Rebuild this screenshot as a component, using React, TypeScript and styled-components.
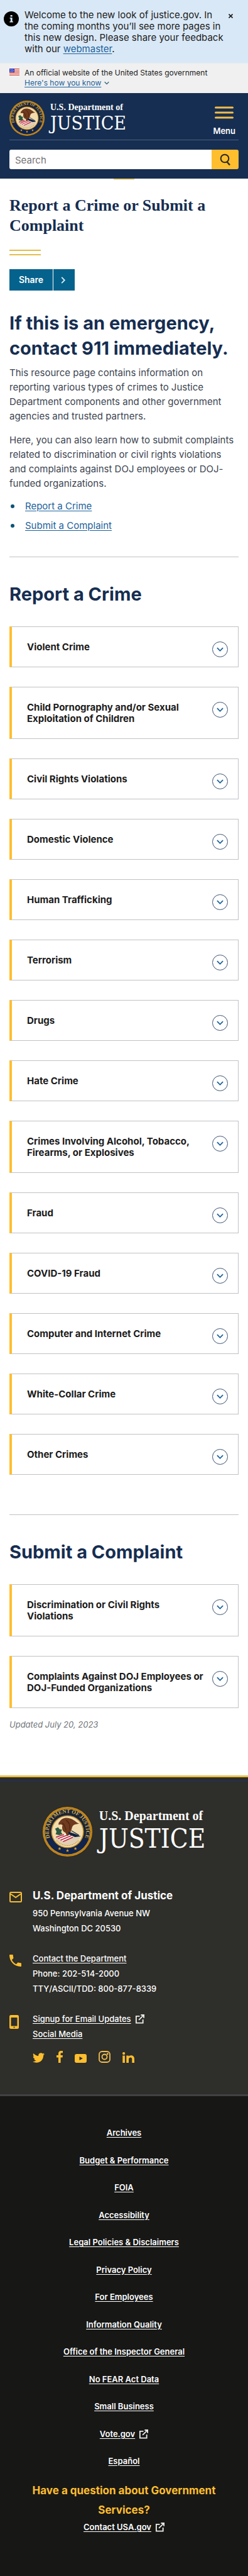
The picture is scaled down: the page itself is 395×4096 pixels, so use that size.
import React from 'react';
import styled, { createGlobalStyle } from 'styled-components';

const GlobalStyle = createGlobalStyle`
  *, *::before, *::after { box-sizing: border-box; }
  body {
    margin: 0;
    background: #171716;
    color: #1b1b1b;
    font-family: Inter, Roboto, "Liberation Sans", sans-serif;
    font-size: 15px;
    line-height: 23px;
  }
  h1, h2, h3, p, ul { margin: 0; padding: 0; }
  ul { list-style: none; }
  button, input { font: inherit; }
  svg { display: block; flex: none; }
`;

const Page = styled.div`
  background: #fff;
`;

const Link = styled.a`
  color: #1c629c;
  text-decoration: underline;
  text-underline-offset: 2px;
`;

/* Site alert */
const Alert = styled.section`
  display: flex;
  align-items: flex-start;
  padding: 15px 0 13px 6px;
  background: #d9e8f6;
  border-bottom: 1px solid #e4edf5;
`;

const AlertIcon = styled.svg`
  margin: 3px 9px 0 0;
`;

const AlertText = styled.p`
  flex: 1;
  line-height: 18px;
`;

const CloseButton = styled.button`
  flex: none;
  width: 34px;
  height: 16px;
  padding: 5px 0 0 3px;
  border: 0;
  background: none;
`;

/* Government banner */
const GovBanner = styled.div`
  display: flex;
  align-items: flex-start;
  gap: 8px;
  padding: 7px 15px 8px;
  background: #f0f0f0;
  font-size: 12px;
  line-height: 16px;
`;

const Flag = styled.svg`
  margin-top: 1px;
`;

const KnowButton = styled.button`
  display: flex;
  align-items: center;
  gap: 5px;
  padding: 0;
  border: 0;
  background: none;
  color: #1c629c;
  line-height: 16px;

  span {
    text-decoration: underline;
    text-underline-offset: 2px;
  }
`;

/* Header */
const Header = styled.header`
  padding: 0 15px 15px;
  background: #162e51;
  color: #fff;
`;

const HeaderTop = styled.div`
  display: flex;
  align-items: flex-start;
  justify-content: space-between;
  padding: 12px 5px 6px 0;
  border-bottom: 1px solid #4c607f;
`;

const Brand = styled.a<{ $large?: boolean }>`
  display: flex;
  justify-content: center;
  align-items: flex-start;
  gap: ${(p) => (p.$large ? 11 : 9)}px;
  color: #fff;
  text-decoration: none;
`;

const BrandText = styled.span`
  display: flex;
  flex-direction: column;
  padding-top: 4px;
`;

const BrandSmall = styled.span<{ $large?: boolean }>`
  font: 700 ${(p) => (p.$large ? '20px/20px' : '14px/14px')} "Liberation Serif", serif;
`;

const BrandName = styled.span<{ $large?: boolean }>`
  font: 400 ${(p) => (p.$large ? '42px/53px' : '30px/36px')} "DejaVu Serif Condensed", "DejaVu Serif", serif;
`;

const MenuButton = styled.button`
  display: flex;
  flex-direction: column;
  align-items: center;
  gap: 11px;
  padding: 9px 0 0;
  border: 0;
  background: none;
  color: #fff;
  font-size: 13px;
  font-weight: 600;
  line-height: 16px;
`;

const SearchForm = styled.form`
  display: flex;
  height: 46px;
  padding-top: 15px;
`;

const SearchInput = styled.input`
  flex: 1;
  min-width: 0;
  padding: 2px 9px 0;
  border: 0;
  border-radius: 3px 0 0 3px;
  background: #fff;
  color: #1b1b1b;

  &::placeholder { color: #757575; opacity: 1; }
`;

const SearchButton = styled.button`
  display: flex;
  align-items: center;
  justify-content: center;
  width: 43px;
  padding: 0;
  border: 0;
  border-radius: 0 3px 3px 0;
  background: #ffbe2e;
`;

const HeaderTab = styled.div`
  width: 33px;
  height: 2px;
  margin: 0 auto;
  background: #eed27a;
`;

/* Main content */
const Main = styled.main`
  padding: 25px 15px 69px;
`;

const Title = styled.h1`
  color: #162e51;
  font: 700 26px/32px "Liberation Serif", serif;
`;

const TitleRule = styled.div`
  width: 50px;
  height: 9px;
  margin: 22px 0;
  border: solid #e2be4a;
  border-width: 2px 0;
`;

const ShareButton = styled.button`
  display: flex;
  align-items: stretch;
  height: 34px;
  padding: 0;
  border: 0;
  background: #05628c;
  color: #fff;
  font-size: 14px;
  font-weight: 600;
  line-height: 34px;
`;

const ShareLabel = styled.span`
  width: 70px;
  border-right: 1px solid #fff;
`;

const ShareArrow = styled.span`
  display: flex;
  align-items: center;
  justify-content: center;
  width: 34px;
  padding-right: 4px;
`;

const Heading = styled.h2`
  color: #162e51;
  font-size: 29px;
  font-weight: 700;
  line-height: 40px;
`;

const Intro = styled.section`
  display: flex;
  flex-direction: column;
  margin-top: 32px;
  color: #3d4551;

  p { margin-bottom: 15px; }
  p:first-of-type { margin-top: 7px; }
  p:last-of-type { margin-bottom: 13px; }
`;

const Bullets = styled.ul`
  display: flex;
  flex-direction: column;
  gap: 8px;
`;

const Bullet = styled.li`
  display: flex;
  align-items: center;
  gap: 17px;
  padding-left: 2px;

  &::before {
    content: "";
    width: 6px;
    height: 6px;
    border-radius: 50%;
    background: #0b5476;
  }
`;

const Divider = styled.hr<{ $after?: boolean }>`
  height: 1px;
  margin: ${(p) => (p.$after ? 63 : 38)}px 0 39px;
  border: 0;
  background: #c0c2c5;
`;

const Cards = styled.div`
  display: flex;
  flex-direction: column;
  gap: 31px;
  margin-top: 31px;
`;

const CardToggle = styled.button`
  display: flex;
  align-items: flex-start;
  gap: 11px;
  width: 100%;
  padding: 23px 16px 15px 24px;
  border: 1px solid #c0c2c5;
  border-left: 4px solid #ffbe2e;
  background: #fff;
  color: #1b1b1b;
  font-weight: 700;
  line-height: 18px;
  text-align: left;
`;

const CardTitle = styled.span`
  flex: 1;
  padding-bottom: 7px;
`;

const CardIcon = styled.span`
  display: flex;
  align-items: center;
  justify-content: center;
  width: 25px;
  height: 25px;
  border: 1px solid #3d5574;
  border-radius: 50%;
`;

const Updated = styled.p`
  margin-top: 15px;
  color: #71767a;
  font-size: 13px;
  font-style: italic;
`;

/* Footer */
const FooterMain = styled.footer`
  padding: 47px 15px 50px;
  border-top: 3px solid #e6c046;
  border-bottom: 3px solid #424244;
  background: linear-gradient(#2e2e2a 5px, #26304a 5px, #26304a 7px, #2e2e2a 7px);
  color: #fff;
  font-size: 13px;
  font-weight: 500;
`;

const ContactList = styled.div`
  display: grid;
  gap: 24px;
  margin-top: 50px;
`;

const ContactRow = styled.div`
  display: grid;
  grid-template-columns: 37px 1fr;
  line-height: 24px;
`;

const RowIcon = styled.span`
  padding-top: 6px;
`;

const RowBody = styled.div`
  display: flex;
  flex-direction: column;
  align-items: flex-start;
`;

const OfficeName = styled.h3`
  padding-bottom: 4px;
  font-size: 17px;
  font-weight: 700;
  line-height: 24px;
`;

const LightLink = styled.a`
  display: inline-flex;
  align-items: center;
  gap: 6px;
  color: #fff;
  text-decoration: underline;
  text-underline-offset: 2px;
`;

const Social = styled.div`
  display: flex;
  align-items: flex-end;
  gap: 19px;
  height: 34px;
`;

const FooterBottom = styled.footer`
  display: flex;
  flex-direction: column;
  align-items: center;
  padding: 47px 40px 66px;
  background: #171716;
  color: #fff;
  font-size: 13px;
  font-weight: 600;
  text-align: center;
`;

const FooterLinks = styled.ul`
  display: flex;
  flex-direction: column;
  justify-content: space-between;
  min-height: 545px;
`;

const Question = styled.h2`
  margin-top: 20px;
  color: #ffbe2e;
  font-size: 17px;
  font-weight: 700;
  line-height: 31px;
`;

const Seal = ({ size, id }: { size: number; id: string }) => (
  <svg width={size} height={size} viewBox="0 0 100 100" aria-hidden="true">
    <defs>
      <path id={id} d="M 15.400 64 A 37.500 37.500 0 1 1 84.600 64" />
    </defs>
    <circle cx="50" cy="50" r="50" fill="#d08f1c" />
    <circle cx="50" cy="50" r="47.600" fill="none" stroke="#5c3f0e" strokeWidth="1" strokeDasharray="1.400 1.600" />
    <circle cx="50" cy="50" r="45.500" fill="#10244c" />
    <path d="M10.500 67 A43 43 0 1 1 89.500 67 L80 63 A33 33 0 1 0 20 63Z" fill="#1d2434" />
    <text fill="#cfae54" fontSize="11" fontWeight="700" fontFamily="Liberation Serif, serif">
      <textPath href={'#' + id} startOffset="50%" textAnchor="middle">DEPARTMENT OF JUSTICE</textPath>
    </text>
    <circle cx="50" cy="50" r="33" fill="#c9952f" />
    <circle cx="50" cy="50" r="31" fill="#f2dcae" />
    <path d="M24 62 A31 31 0 0 0 76 62 L68 57 L32 60Z" fill="#e0cfb4" />
    <path d="M27 59 L58 52 L65 58 L42 70Z" fill="#fff" />
    <path d="M27 61l16-5M31 64l21-8M36 67l22-9M41 70l20-9" stroke="#c1273d" strokeWidth="2.200" />
    <path d="M34 30c4-7 13-9 20-7 9 2 14 9 20 11-6 1-10 1-13 4-3 4-2 10-6 14-1 4-3 6-6 7l-3-7c-6-2-8-9-6-15-2-2-5-2-8-1 0-3 0-5 2-6z" fill="#6f3a1e" />
    <path d="M39 32c4 2 6 7 8 15M47 27c7 4 9 10 7 19" stroke="#4b2411" strokeWidth="1.600" fill="none" />
    <path d="M25 44l6-3 3 4 5 1-2 5 3 4-7 2-7-2 2-5z" fill="#2b5a40" />
    <path d="M53 51l12 4 9 4-9 1-12-5zM58 48l15 9" fill="#12233f" stroke="#12233f" strokeWidth="1.500" />
    <path d="M28 68c12 13 31 13 44 0" fill="none" stroke="#b58a3a" strokeWidth="1.600" strokeDasharray="2 1.400" />
    {[[34, 84], [50, 88], [66, 84]].map(([x, y]) => (
      <path key={x} transform={`translate(${x} ${y})`} fill="#e0a030" d="M0-3.200l.9 2.200 2.400.1-1.900 1.500.7 2.300L0 1.600l-2.100 1.300.7-2.300-1.900-1.500 2.400-.1z" />
    ))}
  </svg>
);

const Chevron = ({ color, width = 11, right }: { color: string; width?: number; right?: boolean }) => (
  <svg width={width} height={width} viewBox="0 0 12 12" fill="none" stroke={color} strokeWidth="2" aria-hidden="true">
    <path d={right ? 'M3.500 1l5 5-5 5' : 'M1 3.500l5 5 5-5'} />
  </svg>
);

const External = () => (
  <svg width="15" height="15" viewBox="0 0 16 16" fill="none" stroke="#e9e9e6" strokeWidth="2" aria-hidden="true">
    <path d="M8 3H2v11.500h11.500V8.500M6.500 9.500L14 2M10 1h5v5" />
  </svg>
);

const Logo = ({ large, id }: { large?: boolean; id: string }) => (
  <Brand href="#" $large={large}>
    <Seal size={large ? 79 : 56} id={id} />
    <BrandText>
      <BrandSmall $large={large}>U.S. Department of</BrandSmall>
      <BrandName $large={large}>JUSTICE</BrandName>
    </BrandText>
  </Brand>
);

const Card = ({ title }: { title: string }) => (
  <CardToggle type="button" aria-expanded="false">
    <CardTitle>{title}</CardTitle>
    <CardIcon><Chevron color="#1c629c" /></CardIcon>
  </CardToggle>
);

const crimes = [
  'Violent Crime',
  'Child Pornography and/or Sexual Exploitation of Children',
  'Civil Rights Violations',
  'Domestic Violence',
  'Human Trafficking',
  'Terrorism',
  'Drugs',
  'Hate Crime',
  'Crimes Involving Alcohol, Tobacco, Firearms, or Explosives',
  'Fraud',
  'COVID-19 Fraud',
  'Computer and Internet Crime',
  'White-Collar Crime',
  'Other Crimes',
];

const complaints = [
  'Discrimination or Civil Rights Violations',
  'Complaints Against DOJ Employees or DOJ-Funded Organizations',
];

const footerLinks = [
  'Archives',
  'Budget & Performance',
  'FOIA',
  'Accessibility',
  'Legal Policies & Disclaimers',
  'Privacy Policy',
  'For Employees',
  'Information Quality',
  'Office of the Inspector General',
  'No FEAR Act Data',
  'Small Business',
  'Vote.gov',
  'Español',
];

export default function App() {
  return (
    <Page>
      <GlobalStyle />
      <Alert>
        <AlertIcon width="24" height="24" viewBox="0 0 24 24" aria-hidden="true">
          <circle cx="12" cy="12" r="12" fill="#000" />
          <path d="M10.600 6h3v2.400h-3zM9.600 10h4v6h1.200v1.600H9.400V16h1.400v-4.400H9.600z" fill="#d9e8f6" />
        </AlertIcon>
        <AlertText>
          Welcome to the new look of justice.gov. In the coming months you’ll see more pages in this new design.
          Please share your feedback with our <Link href="#">webmaster</Link>.
        </AlertText>
        <CloseButton type="button" aria-label="Close">
          <svg width="7" height="7" viewBox="0 0 7 7" stroke="#1b1b1b" strokeWidth="1.600"><path d="M.5.5l6 6M6.500.5l-6 6" /></svg>
        </CloseButton>
      </Alert>

      <GovBanner>
        <Flag width="16" height="11" viewBox="0 0 16 11" aria-hidden="true">
          <path fill="#fff" d="M0 0h16v11H0z" />
          <path stroke="#d0453a" d="M0 .5h16M0 2.500h16M0 4.500h16M0 6.500h16M0 8.500h16M0 10.500h16" />
          <path fill="#2b35b8" d="M0 0h8v6H0z" />
          <path stroke="#fff" strokeDasharray="1 1" d="M1 1.500h6M2 3.500h5M1 5h6" strokeWidth=".8" />
        </Flag>
        <div>
          <p>An official website of the United States government</p>
          <KnowButton type="button" aria-expanded="false">
            <span>Here's how you know</span>
            <Chevron color="#35647c" width={8} />
          </KnowButton>
        </div>
      </GovBanner>

      <Header>
        <HeaderTop>
          <Logo id="ring-top" />
          <MenuButton type="button">
            <svg width="30" height="20" viewBox="0 0 30 20" stroke="#f2bc4a" strokeWidth="3" strokeLinecap="round">
              <path d="M1.500 2h27M1.500 10h27M1.500 18h27" />
            </svg>
            Menu
          </MenuButton>
        </HeaderTop>
        <SearchForm role="search">
          <SearchInput type="text" placeholder="Search" aria-label="Search" />
          <SearchButton type="button" aria-label="Submit search">
            <svg width="18" height="20" viewBox="0 0 18 20" fill="none" stroke="#2a2a20" strokeWidth="2">
              <circle cx="8" cy="8" r="6.300" />
              <path d="M11.500 13.200l4.500 5.300" strokeWidth="2.400" />
            </svg>
          </SearchButton>
        </SearchForm>
      </Header>
      <HeaderTab />

      <Main>
        <Title>Report a Crime or Submit a Complaint</Title>
        <TitleRule />
        <ShareButton type="button">
          <ShareLabel>Share</ShareLabel>
          <ShareArrow><Chevron color="#d5ecf5" right /></ShareArrow>
        </ShareButton>

        <Intro>
          <Heading>If this is an emergency, contact 911 immediately.</Heading>
          <p>
            This resource page contains information on reporting various types of crimes to Justice Department
            components and other government agencies and trusted partners.
          </p>
          <p>
            Here, you can also learn how to submit complaints related to discrimination or civil rights violations
            and complaints against DOJ employees or DOJ-funded organizations.
          </p>
          <Bullets>
            <Bullet><Link href="#report">Report a Crime</Link></Bullet>
            <Bullet><Link href="#complaint">Submit a Complaint</Link></Bullet>
          </Bullets>
        </Intro>

        <Divider />
        <Heading id="report">Report a Crime</Heading>
        <Cards>{crimes.map((c) => <Card key={c} title={c} />)}</Cards>

        <Divider $after />
        <Heading id="complaint">Submit a Complaint</Heading>
        <Cards>{complaints.map((c) => <Card key={c} title={c} />)}</Cards>
        <Updated>Updated July 20, 2023</Updated>
      </Main>

      <FooterMain>
        <Logo large id="ring-bottom" />
        <ContactList>
          <ContactRow>
            <RowIcon>
              <svg width="20" height="17" viewBox="0 0 20 17" fill="none" stroke="#f2bc36" strokeWidth="2">
                <rect x="1" y="1" width="18" height="15" rx="1.500" />
                <path d="M2 3.500l8 5.500 8-5.500" />
              </svg>
            </RowIcon>
            <RowBody>
              <OfficeName>U.S. Department of Justice</OfficeName>
              <span>950 Pennsylvania Avenue NW</span>
              <span>Washington DC 20530</span>
            </RowBody>
          </ContactRow>
          <ContactRow>
            <RowIcon>
              <svg width="19" height="19" viewBox="3 3 18 18" fill="#ffbe2e">
                <path d="M6.620 10.790c1.440 2.830 3.760 5.140 6.590 6.590l2.200-2.200c.27-.27.67-.36 1.020-.24 1.120.37 2.330.57 3.570.57.550 0 1 .45 1 1V20c0 .55-.45 1-1 1-9.390 0-17-7.610-17-17 0-.55.45-1 1-1h3.500c.55 0 1 .45 1 1 0 1.250.2 2.450.57 3.570.11.350.03.740-.25 1.020l-2.200 2.200z" />
              </svg>
            </RowIcon>
            <RowBody>
              <LightLink href="#">Contact the Department</LightLink>
              <span>Phone: 202-514-2000</span>
              <span>TTY/ASCII/TDD: 800-877-8339</span>
            </RowBody>
          </ContactRow>
          <ContactRow>
            <RowIcon>
              <svg width="15" height="22" viewBox="0 0 15 22" fillRule="evenodd" fill="#ffbe2e">
                <path d="M2.500 0h10A2.500 2.500 0 0 1 15 2.500v17a2.500 2.500 0 0 1-2.500 2.500h-10A2.500 2.500 0 0 1 0 19.500v-17A2.500 2.500 0 0 1 2.500 0zM2.500 4v13.500h10V4zM7.500 18.600a1 1 0 1 0 0 2 1 1 0 0 0 0-2z" />
              </svg>
            </RowIcon>
            <RowBody>
              <LightLink href="#">Signup for Email Updates <External /></LightLink>
              <LightLink href="#">Social Media</LightLink>
              <Social>
                <a href="#" aria-label="Twitter">
                  <svg width="19" height="16" viewBox="0 2 24 20" fill="#ffbe2e">
                    <path d="M23.950 4.570a10 10 0 0 1-2.820.77 4.960 4.960 0 0 0 2.160-2.720c-.95.55-2 .95-3.120 1.180a4.920 4.920 0 0 0-8.380 4.480C7.690 8.090 4.070 6.130 1.640 3.160a4.820 4.820 0 0 0-.67 2.480c0 1.710.87 3.210 2.190 4.100a4.900 4.900 0 0 1-2.230-.62v.06a4.920 4.920 0 0 0 3.950 4.830 5 5 0 0 1-2.210.08 4.940 4.940 0 0 0 4.600 3.420A9.870 9.870 0 0 1 0 19.540a13.990 13.990 0 0 0 7.560 2.210c9.050 0 14-7.500 14-13.980 0-.21 0-.42-.02-.63a9.940 9.940 0 0 0 2.460-2.550z" />
                  </svg>
                </a>
                <a href="#" aria-label="Facebook">
                  <svg width="10" height="19" viewBox="0 0 10 19" fill="#ffbe2e">
                    <path d="M3 19v-8.500H0V7h3V4.500C3 1.600 4.600 0 7.200 0H10v3.300H8C7 3.300 6.600 3.800 6.600 4.700V7H10l-.5 3.500H6.600V19z" />
                  </svg>
                </a>
                <a href="#" aria-label="YouTube">
                  <svg width="19" height="14" viewBox="0 0 19 14" fillRule="evenodd" fill="#ffbe2e">
                    <path d="M3 0h13a3 3 0 0 1 3 3v8a3 3 0 0 1-3 3H3a3 3 0 0 1-3-3V3a3 3 0 0 1 3-3zM7.500 4v6l5.300-3z" />
                  </svg>
                </a>
                <a href="#" aria-label="Instagram">
                  <svg width="19" height="19" viewBox="0 0 19 19" fill="none" stroke="#f0bd50" strokeWidth="1.800">
                    <rect x="1" y="1" width="17" height="17" rx="4.500" />
                    <circle cx="9.500" cy="9.500" r="4" />
                    <circle cx="14.300" cy="4.700" r=".6" />
                  </svg>
                </a>
                <a href="#" aria-label="LinkedIn">
                  <svg width="19" height="17" viewBox="0 0 19 17" fill="#ffbe2e">
                    <circle cx="2.100" cy="2.100" r="2.100" />
                    <path d="M.3 5.500h3.600V17H.3zM6.300 5.500h3.500V7c.6-1 1.800-1.800 3.600-1.800 3.400 0 5.600 1.800 5.600 5.500V17h-3.700v-5.700c0-1.700-.8-2.700-2.400-2.700-1.700 0-2.900 1-2.900 2.900V17H6.300z" />
                  </svg>
                </a>
              </Social>
            </RowBody>
          </ContactRow>
        </ContactList>
      </FooterMain>

      <FooterBottom>
        <FooterLinks>
          {footerLinks.map((text) => (
            <li key={text}>
              <LightLink href="#">{text}{text === 'Vote.gov' && <External />}</LightLink>
            </li>
          ))}
        </FooterLinks>
        <Question>Have a question about Government Services?</Question>
        <LightLink href="#">Contact USA.gov <External /></LightLink>
      </FooterBottom>
    </Page>
  );
}
